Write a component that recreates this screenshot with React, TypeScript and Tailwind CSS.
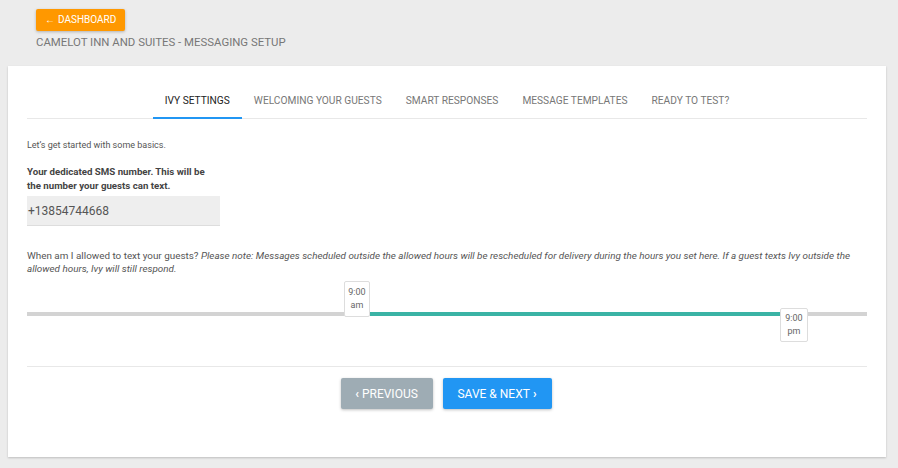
export default function App() {
  const tabs = [
    "IVY SETTINGS",
    "WELCOMING YOUR GUESTS",
    "SMART RESPONSES",
    "MESSAGE TEMPLATES",
    "READY TO TEST?",
  ];
  return (
    <div
      className="min-h-[468px] bg-[#ececec] pt-[9px] pb-[11px]"
      style={{ fontFamily: "Roboto, 'Liberation Sans', sans-serif" }}
    >
      {/* Header */}
      <div className="pl-[36px]">
        <button className="h-[22px] px-[9px] bg-[#ff9800] text-white text-[10px] leading-none rounded-[2px] shadow-[0_1px_3px_rgba(0,0,0,0.25)] flex items-center gap-[3px]">
          <span className="text-[10px]">&larr;</span>
          <span>DASHBOARD</span>
        </button>
        <div className="mt-[4px] text-[11.4px] text-[#777] leading-[14px]">
          CAMELOT INN AND SUITES - MESSAGING SETUP
        </div>
      </div>

      {/* Card */}
      <div className="mx-[8px] mt-[17px] w-[878px] h-[391px] bg-white shadow-[0_1px_2px_rgba(0,0,0,0.2)] px-[19px] pt-[25px]">
        {/* Tabs */}
        <div className="flex justify-center border-b border-[#e8e8e8] h-[28px]">
          {tabs.map((t, i) => (
            <div
              key={t}
              className={
                i === 0
                  ? "px-[12px] text-[10.2px] text-[#222] leading-[20px] border-b-[2px] border-[#2196f3] h-[28px] mb-[-1px]"
                  : "px-[12px] text-[10.2px] text-[#777] leading-[20px]"
              }
            >
              {t}
            </div>
          ))}
        </div>

        <p className="mt-[20px] text-[9px] text-[#555] leading-[12px]">
          Let&rsquo;s get started with some basics.
        </p>

        <p className="mt-[14px] text-[9.7px] font-bold text-[#444] leading-[14px] w-[186px]">
          Your dedicated SMS number. This will be the number your guests can text.
        </p>

        <div className="mt-[3px] w-[193px] h-[30px] bg-[#eeeeee] border-b border-[#ddd] flex items-center px-[1px] text-[12px] text-[#555]">
          +13854744668
        </div>

        <p className="mt-[23px] text-[9.9px] text-[#555] leading-[13px] pr-[4px]">
          When am I allowed to text your guests?{" "}
          <em>
            Please note: Messages scheduled outside the allowed hours will be rescheduled for delivery during the hours you set here. If a guest texts Ivy outside the allowed hours, Ivy will still respond.
          </em>
        </p>

        {/* Slider */}
        <div className="relative mt-[37px] h-[4px] bg-[#d3d3d3]">
          <div className="absolute top-0 left-[343px] w-[410px] h-[4px] bg-[#3ab3a5]" />
          <div className="absolute left-[317px] top-[-31px] w-[26px] h-[36px] bg-white border border-[#ddd] rounded-[2px] flex flex-col items-center justify-center text-[9px] leading-[13px] text-[#666]">
            <span>9:00</span>
            <span>am</span>
          </div>
          <div className="absolute left-[753px] top-[-4px] w-[28px] h-[34px] bg-white border border-[#ddd] rounded-[2px] flex flex-col items-center justify-center text-[9px] leading-[13px] text-[#666]">
            <span>9:00</span>
            <span>pm</span>
          </div>
        </div>

        <div className="mt-[50px] border-t border-[#e8e8e8]" />

        {/* Buttons */}
        <div className="mt-[11px] flex justify-center gap-[10px] pr-[2px]">
          <button className="w-[92px] h-[31px] bg-[#9eacb4] text-white text-[12px] rounded-[2px] shadow-[0_1px_3px_rgba(0,0,0,0.25)] flex items-center justify-center gap-[3px]">
            <span className="text-[12px] font-bold">&lsaquo;</span>
            <span>PREVIOUS</span>
          </button>
          <button className="w-[109px] h-[31px] bg-[#2196f3] text-white text-[12px] rounded-[2px] shadow-[0_1px_3px_rgba(0,0,0,0.25)] flex items-center justify-center gap-[3px]">
            <span>SAVE &amp; NEXT</span>
            <span className="text-[12px] font-bold">&rsaquo;</span>
          </button>
        </div>
      </div>
    </div>
  );
}
